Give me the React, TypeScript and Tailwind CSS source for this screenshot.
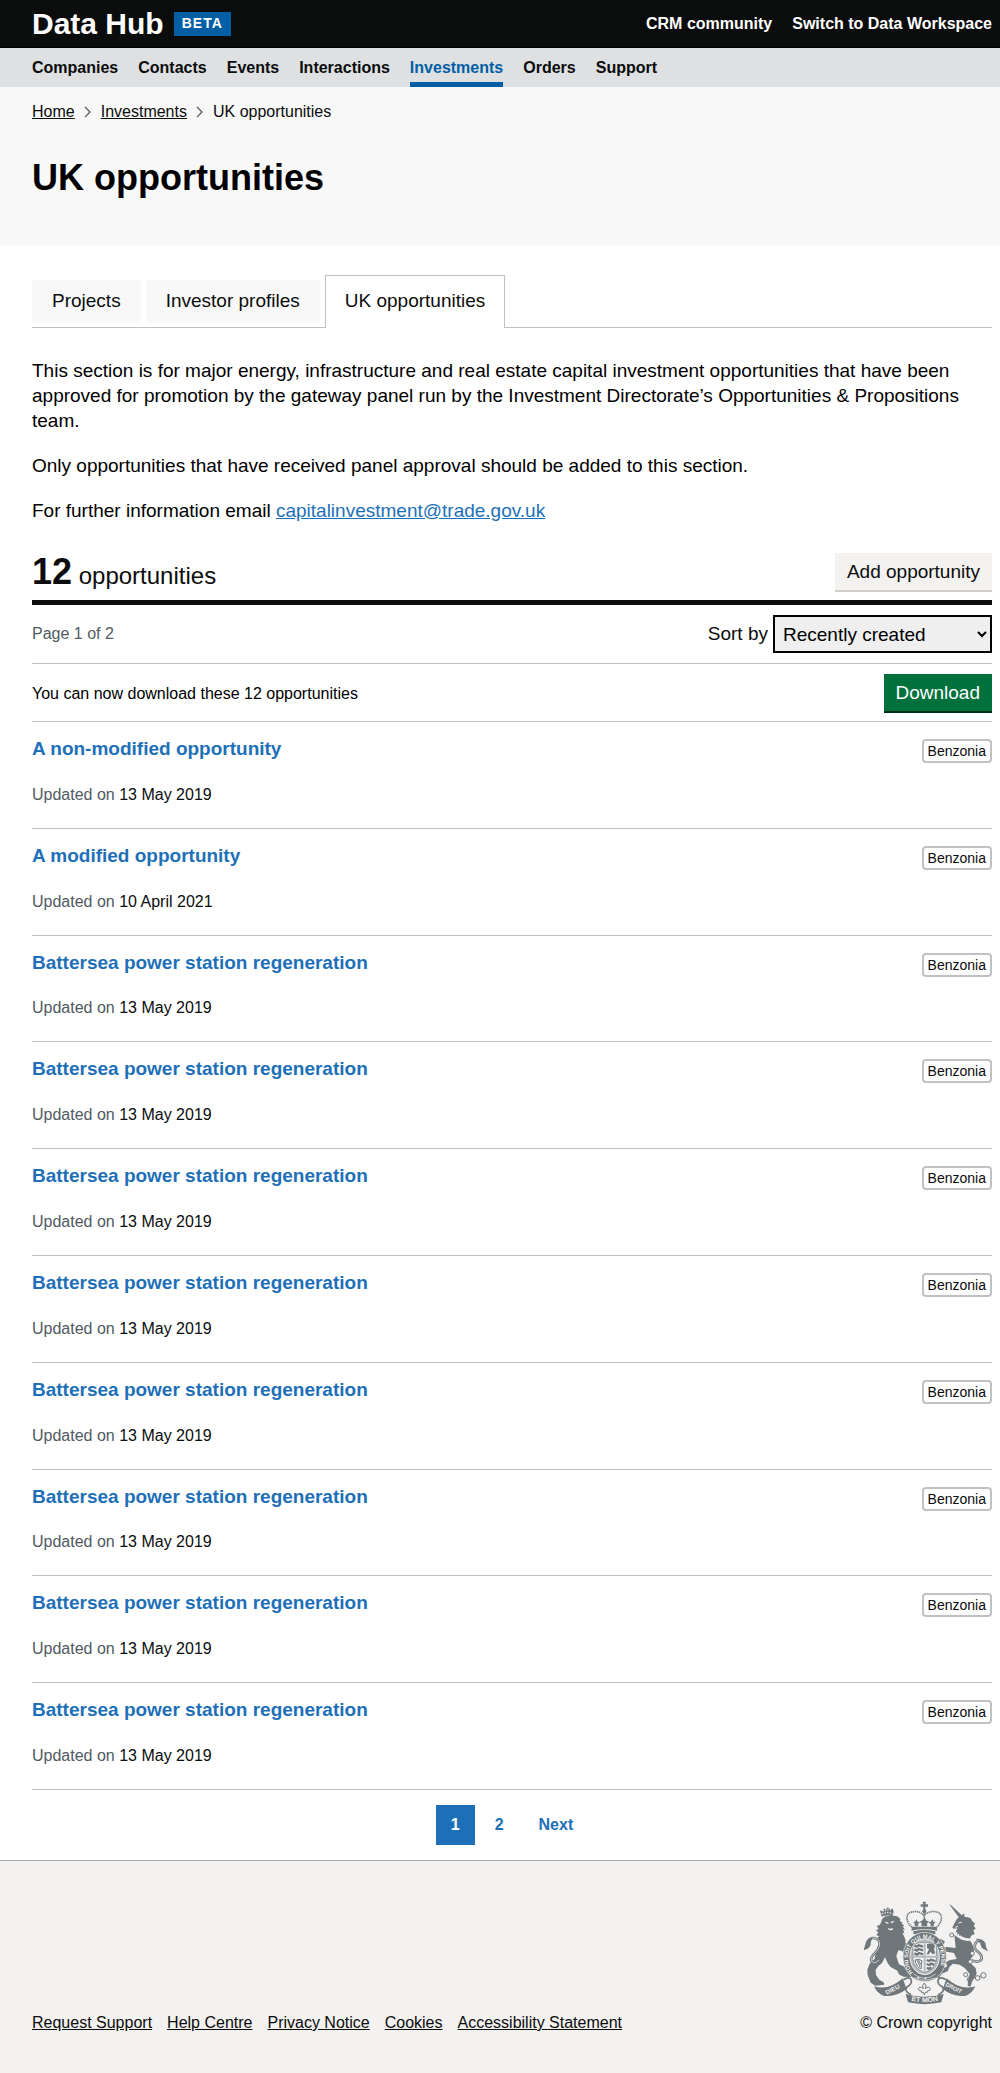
import React from 'react';

const navItems = ['Companies', 'Contacts', 'Events', 'Interactions', 'Investments', 'Orders', 'Support'];

const opportunities = [
  { title: 'A non-modified opportunity', updated: '13 May 2019' },
  { title: 'A modified opportunity', updated: '10 April 2021' },
  ...Array.from({ length: 8 }, () => ({ title: 'Battersea power station regeneration', updated: '13 May 2019' })),
];

const footerLinks = ['Request Support', 'Help Centre', 'Privacy Notice', 'Cookies', 'Accessibility Statement'];

function Chevron() {
  return (
    <svg className="h-3 w-2" viewBox="0 0 8 12" fill="none" stroke="#505a5f" strokeWidth="1.2" aria-hidden="true">
      <path d="M1 1l5 5-5 5" />
    </svg>
  );
}

function Crest() {
  const ink = '#6f777b';
  const paper = '#f3f2f1';
  return (
    <svg className="h-26 w-[126px]" viewBox="71 60 378 312" role="img" aria-label="Royal coat of arms" fontFamily="Liberation Sans" fontWeight="bold">
      <defs>
        <path id="garterRing" d="M221 275A50 60 0 1 1 291 275" />
        <path id="mottoMid" d="M208 357Q256 371 304 357" />
      </defs>

      {/* lion */}
      <g fill={ink}>
        <path d="M126 122q2-12 14-16l24-2q14 1 19 11l-2 4 9 6-4 1 9 9-5 0 7 12-6-2 4 12-6-2 7 15q5 9 2 14l8 17 5 4 2 17-10 7-7-5-7-14-12-2-6 17 8 25 18 8 10 9 12 15-3 6-23-1-13-6-6-12-20-11-8-10-9-19-9 17-10 8-9 12 1 16 10 14 13 8 2 7-27 3-14-9-9-23-1-16 7-18 15-15 3-17 9-29 2-10-7-2 6-10-8-2 6-9-7-5 8-6-6-8 9-3z" />
        <path d="M73 207l7-24q6-16 25-16-13 12-11 25-6 13-21 15z" />
        <path d="M127 107l-5-19 8 3 3-8 8 2 3-6 8 5 8-1 3 9-3 14q-17-5-33 1z" />
      </g>
      <path d="M99 171q27 0 21 25-4 11-14 21-20 20-3 28 9 0 17-8" fill="none" stroke={ink} strokeWidth="8" />
      <path d="M99 171q27 0 21 25-4 11-14 21-20 20-3 28 9 0 17-8" fill="none" stroke={paper} strokeWidth="2" />
      <path d="M128 99q16-9 32 0" stroke={paper} strokeWidth="4" strokeDasharray="4 4" fill="none" />
      <path d="M132 92v-5m7 3v-5m7 3v-5m7 5v-5" stroke={paper} strokeWidth="3" />
      <path d="M138 123l9 4m8-2l8-4M147 143l7 3 7-3" stroke={paper} strokeWidth="4" fill="none" />

      {/* unicorn */}
      <g fill={ink}>
        <path d="M329 69l8 5 40 38-11 7z" />
        <path d="M339 139l14-26 13-8 8-8 2 11q20 0 22 11l10 10-5 4 6 10-7 5 4 11-11 5-2 8q-26 2-45-16l6-14-12 1z" />
        <path d="M345 161q25 22 48 17l9 19q5 18-3 30l-7 10 4 12 13 12 3 18-14 23-4 15-9-3 1-16 5-20-15-17-15-10-20-3-11 10-5 13-18 7-8 14-9-2 5-16 14-12 14-5-3-14 12-6 20-3-8-18-21-4-12 7-12-5-5-14-9-15 6-7 13-4 12 7-2 9-12-4-7 5 8 12 19-5 27 3z" />
        <path d="M447 211l-15-7q-8-5-9-18-8-2-13-13 22-1 29 15-1 10 8 23z" />
      </g>
      <path d="M418 177q-20 15-7 31 28 22 8 33-9 3-22-3" fill="none" stroke={ink} strokeWidth="8" />
      <path d="M418 177q-20 15-7 31 28 22 8 33-9 3-22-3" fill="none" stroke={paper} strokeWidth="2" />
      <path d="M349 155q17 21 46 22" fill="none" stroke={paper} strokeWidth="8" strokeDasharray="5 3" />
      <path d="M357 126l10-2m-19 15l8-3" stroke={paper} strokeWidth="3" />
      <g fill="none" stroke={ink} strokeWidth="3">
        <circle cx="337" cy="162" r="6" fill={paper} /><circle cx="399" cy="217" r="6" fill={paper} /><circle cx="393" cy="242" r="6" fill={paper} />
        <circle cx="379" cy="281" r="6" /><circle cx="391" cy="295" r="7" /><circle cx="415" cy="291" r="7" /><circle cx="432" cy="283" r="8" />
        <path d="M398 292l10-2M421 287l5-3" />
      </g>

      {/* central crown */}
      <g fill={ink}>
        <path d="M250 62h10l-2 8h8v7h-8v12h-6V77h-8v-7h8z" />
        <circle cx="255" cy="91" r="6" />
        <path d="M218 137h74l2 12q-39-8-78 0z" />
        <path d="M226 136l1-7-6-5 6-2 4-7 4 7 7 2-6 5 1 7zM246 136l1-9-7-5 8-3 7-9 7 9 8 3-7 5 1 9zM273 136l1-7-6-5 7-2 4-7 4 7 6 2-6 5 1 7z" />
        <path d="M222 151q33-8 66 0v9q-33-7-66 0z" />
      </g>
      <g fill="none" stroke={ink}>
        <path d="M218 138C199 124 198 99 214 94Q238 86 254 104Q272 86 296 94C312 100 308 126 292 138" strokeWidth="5" strokeDasharray="4 2" />
        <path d="M255 96v22" strokeWidth="5" strokeDasharray="4 2" />
      </g>

      {/* garter and shield */}
      <ellipse cx="256" cy="228" rx="65" ry="74" fill={ink} stroke={paper} strokeWidth="2" />
      <ellipse cx="256" cy="227" rx="44" ry="54" fill="#b5babc" stroke={paper} strokeWidth="3" />
      <path d="M221 190q35-12 70 0v45q-2 27-35 40-33-13-35-40z" fill={paper} stroke={ink} strokeWidth="2" />
      <path d="M256 184v90M214 227h84" stroke="#b5babc" strokeWidth="6" />
      <g stroke={ink} strokeWidth="7" fill="none">
        <path d="M225 193l7 4 6-4 13 4M225 205l8 4 5-5 13 4M225 217l8 4 6-5 12 4" />
        <path d="M262 237l7 3 6-4 13 4M262 249l8 3 6-4 8 3M262 261l7 2 7-4" />
      </g>
      <path d="M263 189q20-5 24 6l-3 10 4 12-9 3-5-8-7 9-5-2 7-14-6-4z" fill={ink} />
      <path d="M227 237q12-5 21 2-3 10-2 24-15-3-19-26zm6 0l9 20m-4-20l6 14" fill="none" stroke={ink} strokeWidth="3" />
      <g fill={paper} fontSize="17">
        <text><textPath href="#garterRing">HONI SOIT QUI MAL Y PENSE</textPath></text>
      </g>
      <path d="M223 279q32 25 66 0M226 290q30 16 60 0" stroke={paper} strokeWidth="2" fill="none" />
      <path d="M237 287v6m-3-3h6M258 289v6m-3-3h6" stroke={paper} strokeWidth="3" />

      {/* motto ribbon */}
      <g fill={ink}>
        <path d="M104 316q45 14 86-24l12 32q-34 26-70 20-17-5-28-28z" />
        <path d="M408 316q-45 14-86-24l-12 32q34 26 70 20 17-5 28-28z" />
        <path d="M199 339q56 17 114 0l-7 25q-50 11-100 0z" />
      </g>
      <path d="M192 296q18-11 24 1 2 12-12 20-9 9 1 18l10 6M320 296q-18-11-24 1-2 12 12 20 9 9-1 18l-10 6" fill={paper} stroke={ink} strokeWidth="5" />
      <g fill={paper} fontSize="19">
        <text transform="translate(142 341) rotate(-26)">DIEU</text>
        <text transform="translate(317 314) rotate(27)" fontSize="17">DROIT</text>
        <text fontSize="21"><textPath href="#mottoMid" startOffset="8">ET MON</textPath></text>
      </g>
      <path d="M255 306q9 8 3 17 11-9 15 0 0 7-9 7v4h-6l-3 8-3-8h-6v-4q-9 0-9-7 4-9 15 0-6-9 3-17z" fill={paper} stroke={ink} strokeWidth="3" />
    </svg>
  );
}

export default function App() {
  return (
    <div className="bg-white font-['Liberation_Sans',Arial,sans-serif] text-base leading-5 text-[#0b0c0c]">
      <header>
        <div className="border-b border-black bg-[#0b0c0c] pr-2 pl-8 text-white">
          <div className="flex h-[47px] items-center justify-between">
            <div className="flex items-center gap-2.5">
              <a href="#" className="text-[30px] leading-8 font-bold">Data Hub</a>
              <strong className="h-6 bg-[#005ea5] px-2 text-sm leading-[22px] font-bold tracking-[1px] uppercase">Beta</strong>
            </div>
            <div className="flex gap-5 font-bold">
              <a href="#">CRM community</a>
              <a href="#">Switch to Data Workspace</a>
            </div>
          </div>
        </div>
        <nav aria-label="Main" className="bg-[#dee0e2] pr-2 pl-8">
          <ul className="flex h-[39px] gap-5 font-bold">
            {navItems.map((item) => (
              <li key={item} className="flex">
                <a
                  href="#"
                  className={item === 'Investments' ? 'border-b-5 border-[#005ea5] pt-2.5 text-[#005ea5]' : 'pt-2.5'}
                >
                  {item}
                </a>
              </li>
            ))}
          </ul>
        </nav>
      </header>

      <div className="bg-[#f8f8f8] pt-[15px] pr-2 pb-[46px] pl-8">
        <nav aria-label="Breadcrumb">
          <ol className="flex items-center">
            <li><a href="#" className="underline">Home</a></li>
            <li className="ml-[9px] flex items-center gap-[9px]"><Chevron /><a href="#" className="underline">Investments</a></li>
            <li className="ml-[9px] flex items-center gap-[9px]"><Chevron />UK opportunities</li>
          </ol>
        </nav>
        <h1 className="mt-[35px] text-4xl leading-[42px] font-bold text-black">UK opportunities</h1>
      </div>

      <main className="pt-[30px] pr-2 pl-8">
        <ul className="flex h-[53px] items-end gap-[5px] border-b border-[#bfc1c3] text-[19px] leading-[25px]">
          <li className="mb-[5px] bg-[#f8f8f8] px-5 pt-2 pb-[9px]"><a href="#">Projects</a></li>
          <li className="mb-[5px] bg-[#f8f8f8] px-5 pt-2 pb-[9px]"><a href="#">Investor profiles</a></li>
          <li className="-mb-px border border-b-0 border-[#bfc1c3] bg-white px-[19px] pt-3 pb-[15px]"><a href="#">UK opportunities</a></li>
        </ul>

        <div className="mt-[30px] space-y-5 text-[19px] leading-[25px] text-black">
          <p>
            This section is for major energy, infrastructure and real estate capital investment opportunities that have been
            approved for promotion by the gateway panel run by the Investment Directorate’s Opportunities &amp; Propositions team.
          </p>
          <p>Only opportunities that have received panel approval should be added to this section.</p>
          <p>
            For further information email{' '}
            <a href="mailto:capitalinvestment@trade.gov.uk" className="text-[#1d70b8] underline">capitalinvestment@trade.gov.uk</a>
          </p>
        </div>

        <div className="mt-[30px] flex items-start justify-between border-b-5 pb-2">
          <h2 className="h-9 pt-0.5 text-2xl leading-[34px]">
            <span className="text-4xl leading-[34px] font-bold">12</span> opportunities
          </h2>
          <button type="button" className="border-b-2 border-[#cfcec8] bg-[#f3f2f1] px-3 py-1.5 text-[19px] leading-[25px]">
            Add opportunity
          </button>
        </div>

        <div className="flex items-center justify-between border-b border-[#bfc1c3] py-2.5">
          <p className="text-[#505a5f]">Page 1 of 2</p>
          <div className="flex items-center gap-[5px] text-[19px]">
            <label htmlFor="sort">Sort by</label>
            <select id="sort" className="h-[38px] w-[219px] border-2 border-black bg-[#efefef] px-1 text-black">
              <option>Recently created</option>
            </select>
          </div>
        </div>

        <div className="flex items-center justify-between border-b border-[#bfc1c3] pt-2.5 pb-2">
          <p className="text-black">You can now download these 12 opportunities</p>
          <button type="button" className="border-b-2 border-[#002d18] bg-[#00703c] px-3 py-1.5 text-[19px] leading-[25px] text-white">
            Download
          </button>
        </div>

        <ol>
          {opportunities.map((item, index) => (
            <li key={index} className="border-b border-[#bfc1c3] pt-4 pb-[23px]">
              <div className="flex items-start justify-between">
                <h3 className="text-[19px] leading-[1.2] font-bold text-[#1d70b8]"><a href="#">{item.title}</a></h3>
                <span className="mt-px -mb-5 rounded border-2 border-[#bfc1c3] px-1 text-sm leading-5">Benzonia</span>
              </div>
              <p className="mt-6"><span className="text-[#505a5f]">Updated on</span> {item.updated}</p>
            </li>
          ))}
        </ol>

        <nav aria-label="Pagination" className="flex justify-center gap-[5px] py-[15px] font-bold text-[#1d70b8]">
          <a href="#" aria-current="page" className="bg-[#1d70b8] px-[15px] py-2.5 text-white">1</a>
          <a href="#" className="px-[15px] py-2.5">2</a>
          <a href="#" className="px-[15px] py-2.5">Next</a>
        </nav>
      </main>

      <footer className="flex items-end justify-between border-t border-[#a1acb2] bg-[#f3f2f1] pt-10 pr-2 pb-10 pl-8">
        <ul className="flex gap-[15px]">
          {footerLinks.map((link) => (
            <li key={link}><a href="#" className="underline">{link}</a></li>
          ))}
        </ul>
        <a href="#" className="flex flex-col items-center gap-2">
          <Crest />
          <span>© Crown copyright</span>
        </a>
      </footer>
    </div>
  );
}
